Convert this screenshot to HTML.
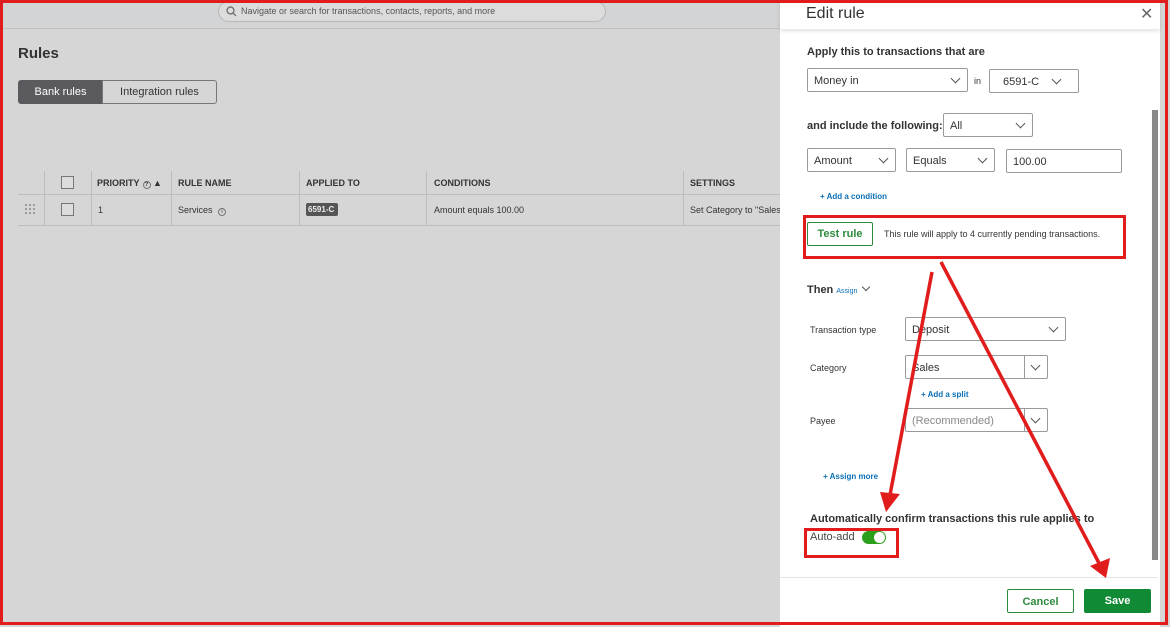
<!DOCTYPE html>
<html><head><meta charset="utf-8"><style>
*{box-sizing:border-box;margin:0;padding:0}
body{width:1170px;height:627px;overflow:hidden;position:relative;background:#d6d6d6;font-family:"Liberation Sans",Arial,sans-serif;color:#333}
.abs{position:absolute}
.top{left:0;top:0;width:780px;height:29px;background:#d2d4d6;border-bottom:1px solid #bfc1c3}
.search{left:218px;top:1px;width:388px;height:21px;border:1px solid #b8b8b8;border-radius:11px;background:#dcdcdc;font-size:9px;color:#555;padding:4px 0 0 22px}
.btab{font-size:11px;height:24px;top:80px;border:1px solid #777;padding-top:5px;text-align:center}
.th{font-size:9px;font-weight:bold;color:#333;top:178px;line-height:10px}
.td{font-size:9px;color:#333;top:205px;line-height:10px}
.vl{width:1px;background:#bdbdbd;top:171px;height:54px}
.cb{width:13px;height:13px;border:1px solid #777;background:#ddd}
.panel{left:780px;top:0;width:380px;height:627px;background:#fff}
.sel{border:1px solid #9a9a9a;border-radius:2px;height:24px;font-size:11px;color:#333;padding:6px 0 0 6px;background:#fff;line-height:12px}
.chev{position:absolute;right:8px;top:6px;width:7px;height:7px;border-right:1.3px solid #555;border-bottom:1.3px solid #555;transform:rotate(45deg)}
.lbl{font-size:9px;color:#333;line-height:10px}
.link{font-size:8px;color:#0a6fb5;font-weight:bold}
.red{border:3px solid #e11c1c}
.ic{display:inline-block;width:8px;height:8px;border:1px solid #777;border-radius:50%;font-size:6px;text-align:center;line-height:6px;vertical-align:0;margin-left:3px}
</style></head><body>
<div class="abs top"></div>
<div class="abs search"><svg class="abs" style="left:7px;top:4px" width="11" height="11"><circle cx="4.5" cy="4.5" r="3.5" fill="none" stroke="#666" stroke-width="1.2"/><line x1="7" y1="7" x2="10" y2="10" stroke="#666" stroke-width="1.2"/></svg>Navigate or search for transactions, contacts, reports, and more</div>
<div class="abs" style="left:18px;top:45px;font-size:15px;font-weight:bold;color:#333">Rules</div>
<div class="abs btab" style="left:18px;width:85px;background:#5a5a5f;color:#fff;border-radius:3px 0 0 3px;border-color:#5a5a5f">Bank rules</div>
<div class="abs btab" style="left:102px;width:115px;color:#333;border-radius:0 3px 3px 0">Integration rules</div>
<div class="abs" style="left:18px;top:194px;width:762px;height:1px;background:#bdbdbd"></div>
<div class="abs" style="left:18px;top:225px;width:762px;height:1px;background:#bdbdbd"></div>
<div class="abs vl" style="left:44px"></div><div class="abs vl" style="left:91px"></div><div class="abs vl" style="left:171px"></div><div class="abs vl" style="left:299px"></div><div class="abs vl" style="left:426px"></div><div class="abs vl" style="left:683px"></div>
<div class="abs cb" style="left:61px;top:176px"></div><div class="abs cb" style="left:61px;top:203px"></div>
<div class="abs th" style="left:97px">PRIORITY<span class="ic">?</span> ▲</div>
<div class="abs th" style="left:178px">RULE NAME</div>
<div class="abs th" style="left:306px">APPLIED TO</div>
<div class="abs th" style="left:434px">CONDITIONS</div>
<div class="abs th" style="left:690px">SETTINGS</div>
<svg class="abs" style="left:25px;top:204px" width="12" height="10"><g fill="#555"><circle cx="1" cy="1" r=".8"/><circle cx="5" cy="1" r=".8"/><circle cx="9" cy="1" r=".8"/><circle cx="1" cy="5" r=".8"/><circle cx="5" cy="5" r=".8"/><circle cx="9" cy="5" r=".8"/><circle cx="1" cy="9" r=".8"/><circle cx="5" cy="9" r=".8"/><circle cx="9" cy="9" r=".8"/></g></svg>
<div class="abs td" style="left:98px">1</div>
<div class="abs td" style="left:178px">Services <span class="ic">i</span></div>
<div class="abs" style="left:306px;top:203px;width:32px;height:13px;background:#555;color:#eee;font-size:8px;border-radius:2px;padding:2px 0 0 2px;font-weight:bold">6591-C</div>
<div class="abs td" style="left:434px">Amount equals 100.00</div>
<div class="abs td" style="left:690px">Set Category to "Sales"</div>

<div class="abs panel"></div>
<div class="abs" style="left:780px;top:0;width:380px;height:29px;box-shadow:0 2px 4px rgba(0,0,0,.12);background:#fff"></div>
<div class="abs" style="left:806px;top:5px;font-size:16px;color:#333">Edit rule</div>
<div class="abs" style="left:1140px;top:4px;font-size:16px;color:#666">✕</div>
<div class="abs" style="left:1152px;top:110px;width:6px;height:450px;background:#8a8a8a"></div>
<div class="abs" style="left:807px;top:46px;font-size:11px;font-weight:bold">Apply this to transactions that are</div>
<div class="abs sel" style="left:807px;top:68px;width:161px">Money in<span class="chev"></span></div>
<div class="abs lbl" style="left:974px;top:76px">in</div>
<div class="abs sel" style="left:989px;top:69px;width:90px;padding-left:13px">6591-C<span class="chev" style="right:18px"></span></div>
<div class="abs" style="left:807px;top:120px;font-size:11px;font-weight:bold">and include the following:</div>
<div class="abs sel" style="left:943px;top:113px;width:90px">All<span class="chev"></span></div>
<div class="abs sel" style="left:807px;top:148px;width:89px">Amount<span class="chev"></span></div>
<div class="abs sel" style="left:906px;top:148px;width:89px">Equals<span class="chev"></span></div>
<div class="abs sel" style="left:1006px;top:149px;width:116px">100.00</div>
<div class="abs link" style="left:820px;top:192px">+ Add a condition</div>
<div class="abs red" style="left:803px;top:215px;width:323px;height:44px"></div>
<div class="abs" style="left:807px;top:222px;width:66px;height:24px;border:1px solid #2e8b3e;border-radius:2px;color:#2e8b3e;font-size:11px;font-weight:bold;padding-top:5px;text-align:center">Test rule</div>
<div class="abs lbl" style="left:884px;top:229px">This rule will apply to 4 currently pending transactions.</div>
<div class="abs" style="left:807px;top:284px;font-size:11px;font-weight:bold">Then <span style="font-size:7px;color:#0a6fb5;font-weight:normal">Assign</span> <span style="display:inline-block;width:6px;height:6px;border-right:1.2px solid #555;border-bottom:1.2px solid #555;transform:rotate(45deg);margin-left:3px;vertical-align:3px"></span></div>
<div class="abs lbl" style="left:810px;top:325px">Transaction type</div>
<div class="abs sel" style="left:905px;top:317px;width:161px">Deposit<span class="chev"></span></div>
<div class="abs lbl" style="left:810px;top:363px">Category</div>
<div class="abs sel" style="left:905px;top:355px;width:143px">Sales<span class="abs" style="left:118px;top:0;width:1px;height:22px;background:#9a9a9a"></span><span class="chev"></span></div>
<div class="abs link" style="left:921px;top:390px">+ Add a split</div>
<div class="abs lbl" style="left:810px;top:416px">Payee</div>
<div class="abs sel" style="left:905px;top:408px;width:143px;color:#888">(Recommended)<span class="abs" style="left:118px;top:0;width:1px;height:22px;background:#9a9a9a"></span><span class="chev"></span></div>
<div class="abs link" style="left:823px;top:472px">+ Assign more</div>
<div class="abs" style="left:810px;top:513px;font-size:11px;font-weight:bold">Automatically confirm transactions this rule applies to</div>
<div class="abs red" style="left:804px;top:528px;width:95px;height:30px"></div>
<div class="abs" style="left:810px;top:531px;font-size:11px;color:#444">Auto-add</div>
<div class="abs" style="left:862px;top:531px;width:24px;height:13px;border-radius:7px;background:#2ca01c"><div class="abs" style="left:12px;top:1px;width:11px;height:11px;border-radius:50%;background:#fff"></div></div>
<div class="abs" style="left:780px;top:577px;width:378px;height:1px;background:#e4e4e8"></div>
<div class="abs" style="left:1007px;top:589px;width:67px;height:24px;border:1px solid #2e8b3e;border-radius:2px;color:#2e8b3e;font-size:11px;font-weight:bold;padding-top:6px;text-align:center">Cancel</div>
<div class="abs" style="left:1084px;top:589px;width:67px;height:24px;background:#108a34;border-radius:2px;color:#fff;font-size:11px;font-weight:bold;padding-top:6px;text-align:center">Save</div>

<svg class="abs" style="left:0;top:0" width="1170" height="627">
<line x1="932" y1="272" x2="890" y2="495" stroke="#e11c1c" stroke-width="3.5"/>
<polygon points="880,492 900,494 886,512" fill="#e11c1c"/>
<line x1="941" y1="262" x2="1100" y2="565" stroke="#e11c1c" stroke-width="3.5"/>
<polygon points="1090,566 1110,558 1106,578" fill="#e11c1c"/>
<rect x="1.5" y="1.5" width="1165" height="622" fill="none" stroke="#e11c1c" stroke-width="3"/>
</svg>
</body></html>
